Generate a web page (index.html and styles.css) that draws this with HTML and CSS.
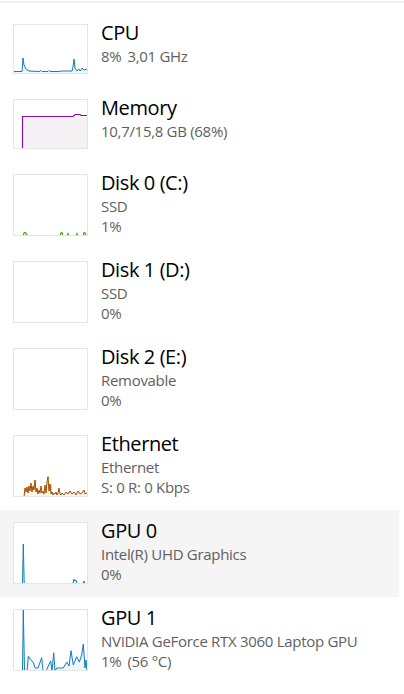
FILE: index.html
```html
<!DOCTYPE html>
<html lang="en">

<head>
    <meta charset="UTF-8">
    <meta name="viewport" content="width=device-width, initial-scale=1.0">
    <title>Performance</title>
    <link rel="stylesheet" href="styles.css">
</head>

<body>
    <div class="topline"></div>
    <div class="list">
        <div class="item">
            <div class="thumb">
                <svg viewBox="0 0 73 48" width="73" height="48">
                    <polygon class="cpu-fill" points="0,46.5 8,46.5 9,33 10,40 12,44 15,46 25,46.5 27,45.5 28,46.5 34,46.5 35,45.5 37,46.5 45,46.5 48,46 58,46 59,42 60,34 61,43 63,46 65,44 66,46 67,45 68,43 70,45 73,44 73,48 0,48" />
                    <polyline class="cpu-line" points="0,46.5 8,46.5 9,33 10,40 12,44 15,46 25,46.5 27,45.5 28,46.5 34,46.5 35,45.5 37,46.5 45,46.5 48,46 58,46 59,42 60,34 61,43 63,46 65,44 66,46 67,45 68,43 70,45 73,44" />
                </svg>
            </div>
            <div class="info">
                <div class="title">CPU</div>
                <div class="sub"><span class="gap">8%</span>3,01 GHz</div>
            </div>
        </div>

        <div class="item">
            <div class="thumb">
                <svg viewBox="0 0 73 48" width="73" height="48">
                    <polygon class="mem-fill" points="8.5,48 8.5,16.5 59,16.5 61,14.5 66,14.5 67,15.5 73,15.5 73,48" />
                    <polyline class="mem-line" points="8.5,48 8.5,16.5 59,16.5 61,14.5 66,14.5 67,15.5 73,15.5" />
                </svg>
            </div>
            <div class="info">
                <div class="title">Memory</div>
                <div class="sub">10,7/15,8 GB (68%)</div>
            </div>
        </div>

        <div class="item">
            <div class="thumb tall">
                <svg viewBox="0 0 73 60" width="73" height="60">
                    <polyline class="disk-line" points="0,61 9,61 10,58 11,57.5 12,58 13,61 46,61 47,58 48,57.5 49,61 53,61 54,58.5 55,61 62,61 63,58.5 64,61 69,61 70,57.5 71,58 72,61" />
                </svg>
            </div>
            <div class="info">
                <div class="title">Disk 0 (C:)</div>
                <div class="sub">SSD</div>
                <div class="sub">1%</div>
            </div>
        </div>

        <div class="item">
            <div class="thumb tall"></div>
            <div class="info">
                <div class="title">Disk 1 (D:)</div>
                <div class="sub">SSD</div>
                <div class="sub">0%</div>
            </div>
        </div>

        <div class="item">
            <div class="thumb tall"></div>
            <div class="info">
                <div class="title">Disk 2 (E:)</div>
                <div class="sub">Removable</div>
                <div class="sub">0%</div>
            </div>
        </div>

        <div class="item">
            <div class="thumb tall">
                <svg viewBox="0 0 73 60" width="73" height="60">
                    <polyline class="net-send" points="20,61 21,45 22,61 33,61 34,40 35,61 36,61 37,48 38,61" />
                    <polygon class="net-fill" points="10,61 11,52 12,56 13,51 14,57 15,50 16,55 17,47 18,56 19,50 20,54 21,44 22,56 23,52 24,58 25,54 26,57 27,50 28,57 29,55 30,58 31,49 32,57 33,46 34,41 35,55 36,48 37,58 38,56 39,59 40,57 41,58 42,56 43,59 44,57 45,52 46,58 47,59 48,57 50,59 52,56 54,58 56,55 58,58 60,56 62,59 64,55 66,58 68,57 70,54 71,58 73,57 73,61" />
                    <polyline class="net-line" points="10,61 11,52 12,56 13,51 14,57 15,50 16,55 17,47 18,56 19,50 20,54 21,44 22,56 23,52 24,58 25,54 26,57 27,50 28,57 29,55 30,58 31,49 32,57 33,46 34,41 35,55 36,48 37,58 38,56 39,59 40,57 41,58 42,56 43,59 44,57 45,52 46,58 47,59 48,57 50,59 52,56 54,58 56,55 58,58 60,56 62,59 64,55 66,58 68,57 70,54 71,58 73,57" />
                </svg>
            </div>
            <div class="info">
                <div class="title">Ethernet</div>
                <div class="sub">Ethernet</div>
                <div class="sub">S: 0 R: 0 Kbps</div>
            </div>
        </div>

        <div class="item selected">
            <div class="thumb tall">
                <svg viewBox="0 0 73 60" width="73" height="60">
                    <polyline class="gpu-line" points="0,60.5 8.5,60.5 9.3,21 10.2,60.5 59,60.5 60,56 61,58 62,57 63,60.5 69,60.5 70,58 71,60.5 73,60.5" />
                </svg>
            </div>
            <div class="info">
                <div class="title">GPU 0</div>
                <div class="sub">Intel(R) UHD Graphics</div>
                <div class="sub">0%</div>
            </div>
        </div>

        <div class="item">
            <div class="thumb tall">
                <svg viewBox="0 0 73 60" width="73" height="60">
                    <polygon class="cpu-fill" points="0,61 8.5,61 9.3,0 10.5,61 13,61 14.3,46 16.7,50 19.3,52 21,58 24,58 27.7,47.7 29,61 32,61 34.3,56 36.7,51 38,61 39.7,42.7 41,61 42.7,58 49.3,58 52.7,52 55,56 57,40.7 59.3,55 62.7,46.7 65.3,52 67.7,45 69.3,34 71,58 72,50 73,61" />
                    <polyline class="cpu-line" points="0,61 8.5,61 9.3,0 10.5,61 13,61 14.3,46 16.7,50 19.3,52 21,58 24,58 27.7,47.7 29,61 32,61 34.3,56 36.7,51 38,61 39.7,42.7 41,61 42.7,58 49.3,58 52.7,52 55,56 57,40.7 59.3,55 62.7,46.7 65.3,52 67.7,45 69.3,34 71,58 72,50 73,61" />
                </svg>
            </div>
            <div class="info">
                <div class="title">GPU 1</div>
                <div class="sub">NVIDIA GeForce RTX 3060 Laptop GPU</div>
                <div class="sub"><span class="gap">1%</span>(56 °C)</div>
            </div>
        </div>
    </div>
</body>

</html>
```

FILE: styles.css
```css
body {
    font-family: "Open Sans", sans-serif;
    background-color: white;
    margin: 0;
    padding: 0;
}

.topline {
    height: 2px;
    margin-top: 1px;
    background: #f0f0f0;
}

.list {
    width: 399px;
    padding-top: 9px;
}

.item {
    display: flex;
    align-items: flex-start;
    gap: 13px;
    padding: 12px 0 13px 13px;
}

.item.selected {
    background: #f5f5f5;
}

.thumb {
    width: 73px;
    height: 48px;
    border: 1px solid #e5e5e5;
    background: white;
    flex-shrink: 0;
}

.thumb.tall {
    height: 60px;
}

.thumb svg {
    display: block;
    overflow: hidden;
}

.info {
    margin-top: -4px;
}

.title {
    font-size: 20px;
    line-height: 26px;
    color: #000;
    letter-spacing: -0.4px;
}

.sub {
    font-size: 15px;
    line-height: 20px;
    color: #5f5f5f;
    letter-spacing: -0.3px;
}

.gap {
    margin-right: 6px;
}

.cpu-line,
.gpu-line {
    fill: none;
    stroke: #117dbb;
    stroke-width: 1;
}

.cpu-fill {
    fill: #f1f6fa;
}

.mem-line {
    fill: none;
    stroke: #8b12ae;
    stroke-width: 1.2;
}

.mem-fill {
    fill: #f4f2f4;
}

.disk-line {
    fill: #eff7e9;
    stroke: #4da60c;
    stroke-width: 1.2;
}

.net-line {
    fill: none;
    stroke: #a74f01;
    stroke-width: 1;
}

.net-fill {
    fill: #fcf3eb;
}

.net-send {
    fill: none;
    stroke: #d98a4a;
    stroke-width: 1;
    stroke-dasharray: 1 1;
}
```
